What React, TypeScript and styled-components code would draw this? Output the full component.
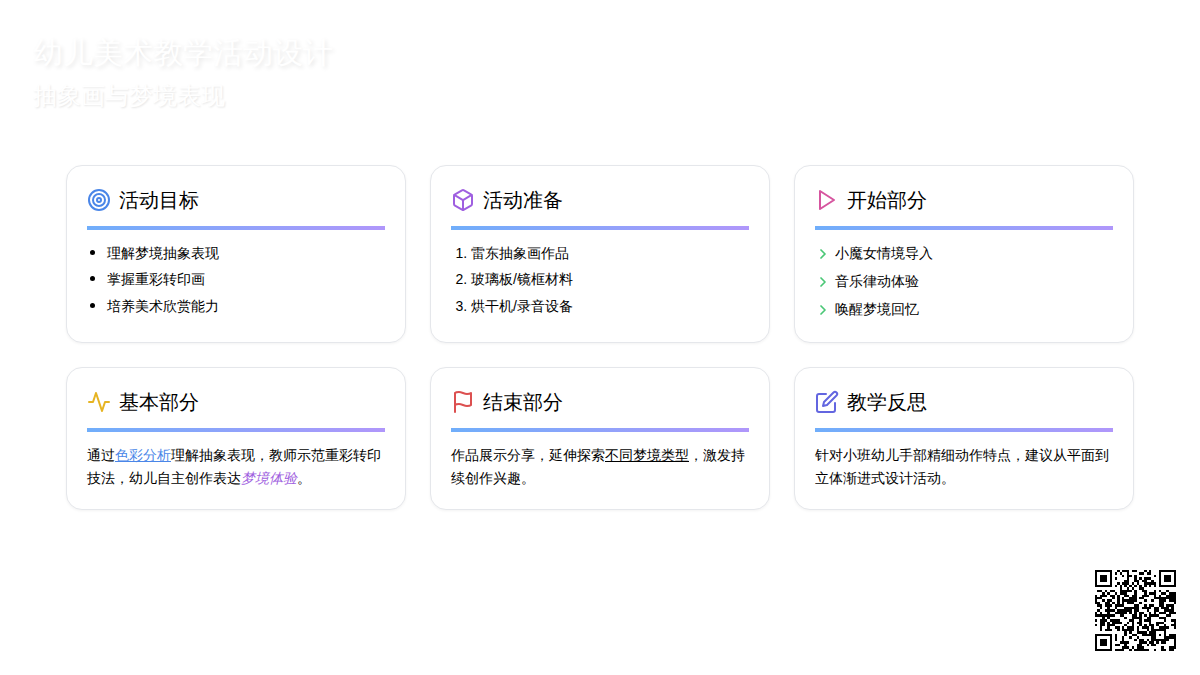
import React from 'react';
import styled, { createGlobalStyle } from 'styled-components';
import { Target, ChevronRight } from 'lucide-react';

const GlobalStyle = createGlobalStyle`
  html, body {
    margin: 0;
    padding: 0;
    background: #fff;
    color: #000;
    font-family: "Liberation Sans", sans-serif;
  }
`;

const Page = styled.div`
  position: relative;
  width: 1200px;
  height: 675px;
  overflow: hidden;
  background: #fff;
`;

const Header = styled.header`
  padding: 33px 33px 0;
`;

const Title = styled.h1`
  margin: 0;
  font-size: 30px;
  line-height: 40px;
  font-weight: 400;
  color: #fff;
  text-shadow: 2px 2px 4px rgba(0, 0, 0, 0.1);
`;

const Subtitle = styled.h2`
  margin: 7px 0 0;
  font-size: 24px;
  line-height: 32px;
  font-weight: 400;
  color: #fff;
  text-shadow: 1px 1px 2px rgba(0, 0, 0, 0.1);
`;

const Grid = styled.main`
  display: grid;
  grid-template-columns: repeat(3, 340px);
  gap: 24px;
  margin: 53px 0 0 66px;
`;

const Card = styled.section`
  box-sizing: border-box;
  padding: 20px;
  background: #fff;
  border: 1px solid #e5e7eb;
  border-radius: 16px;
  box-shadow: 0 1px 3px rgba(0, 0, 0, 0.05);
`;

const CardHead = styled.div`
  display: flex;
  align-items: center;
  gap: 8px;
  height: 28px;
  margin-bottom: 12px;
`;

const IconSlot = styled.span<{ $color: string }>`
  display: flex;
  width: 24px;
  height: 24px;
  color: ${(p) => p.$color};
`;

const CardTitle = styled.h3`
  margin: 0;
  font-size: 20px;
  line-height: 28px;
  font-weight: 400;
`;

const Bar = styled.div`
  height: 4px;
  margin-bottom: 12px;
  background: linear-gradient(90deg, #60a5fa, #a78bfa);
  opacity: 0.9;
`;

const BulletList = styled.ul`
  margin: 0;
  padding-left: 20px;
  font-size: 14px;
  line-height: 22.4px;

  li::marker {
    font-size: 17px;
  }
`;

const NumberList = styled.ol`
  margin: 0;
  padding-left: 20px;
  font-size: 14px;
  line-height: 22.4px;
`;

const Item = styled.li`
  margin-bottom: 4px;
`;

const ArrowList = styled.ul`
  margin: 0;
  padding: 0;
  list-style: none;
  font-size: 14px;
  line-height: 22.4px;
`;

const ArrowItem = styled.li`
  display: flex;
  align-items: flex-start;
  gap: 4px;
  height: 24px;
  margin-bottom: 4px;

  &:last-child {
    margin-bottom: 0;
  }

  svg {
    margin-top: 4px;
    color: #4ac776;
    flex: none;
  }
`;

const Text = styled.p`
  margin: 0 0 -1px;
  font-size: 14px;
  line-height: 23px;
`;

const BlueLink = styled.span`
  color: #4a86e8;
  text-decoration: underline;
`;

const PurpleEm = styled.em`
  color: #9f5fe0;
  font-style: italic;
`;

const Under = styled.span`
  text-decoration: underline;
`;

const QrBox = styled.div`
  position: absolute;
  right: 24px;
  bottom: 24px;
  width: 81px;
  height: 81px;
`;

const QR_SIZE = 33;

const reserved = (x: number, y: number) =>
  (x < 8 && y < 8) ||
  (x >= QR_SIZE - 8 && y < 8) ||
  (x < 8 && y >= QR_SIZE - 8) ||
  (x >= 24 && x <= 28 && y >= 24 && y <= 28) ||
  x === 6 ||
  y === 6;

const qrCells = () => {
  const cells: [number, number][] = [];
  let seed = 73421;
  for (let y = 0; y < QR_SIZE; y++) {
    for (let x = 0; x < QR_SIZE; x++) {
      seed = (seed * 1103515245 + 12345) & 0x7fffffff;
      if (!reserved(x, y) && (seed >> 16) % 100 < 50) cells.push([x, y]);
    }
  }
  for (let i = 8; i < QR_SIZE - 8; i += 2) {
    cells.push([i, 6], [6, i]);
  }
  return cells;
};

const Finder = ({ x, y }: { x: number; y: number }) => (
  <g>
    <rect x={x + 0.5} y={y + 0.5} width={6} height={6} fill="none" stroke="#000" />
    <rect x={x + 2} y={y + 2} width={3} height={3} fill="#000" />
  </g>
);

const QrCode = () => (
  <svg width="81" height="81" viewBox="0 0 33 33" shapeRendering="crispEdges">
    <Finder x={0} y={0} />
    <Finder x={26} y={0} />
    <Finder x={0} y={26} />
    <rect x={24.5} y={24.5} width={4} height={4} fill="none" stroke="#000" />
    <rect x={26} y={26} width={1} height={1} fill="#000" />
    {qrCells().map(([x, y]) => (
      <rect key={`${x}-${y}`} x={x} y={y} width={1} height={1} fill="#000" />
    ))}
  </svg>
);

const Icon = ({ children }: { children: React.ReactNode }) => (
  <svg width="24" height="24" viewBox="0 0 24 24" fill="none" stroke="currentColor" strokeWidth="2" strokeLinecap="round" strokeLinejoin="round">
    {children}
  </svg>
);

const BoxIcon = () => (
  <Icon>
    <path d="M21 16V8a2 2 0 0 0-1-1.73l-7-4a2 2 0 0 0-2 0l-7 4A2 2 0 0 0 3 8v8a2 2 0 0 0 1 1.73l7 4a2 2 0 0 0 2 0l7-4A2 2 0 0 0 21 16z" />
    <polyline points="3.27 6.96 12 12.01 20.73 6.96" />
    <line x1="12" y1="22.08" x2="12" y2="12" />
  </Icon>
);

const PlayIcon = () => (
  <Icon>
    <polygon points="5 3 19 12 5 21 5 3" />
  </Icon>
);

const ActivityIcon = () => (
  <Icon>
    <polyline points="22 12 18 12 15 21 9 3 6 12 2 12" />
  </Icon>
);

const FlagIcon = () => (
  <Icon>
    <path d="M4 15s1-1 4-1 5 2 8 2 4-1 4-1V3s-1 1-4 1-5-2-8-2-4 1-4 1z" />
    <line x1="4" y1="22" x2="4" y2="15" />
  </Icon>
);

const EditIcon = () => (
  <Icon>
    <path d="M11 4H4a2 2 0 0 0-2 2v14a2 2 0 0 0 2 2h14a2 2 0 0 0 2-2v-7" />
    <path d="M18.5 2.5a2.121 2.121 0 0 1 3 3L12 15l-4 1 1-4 9.5-9.5z" />
  </Icon>
);

const Arrow = () => <ChevronRight size={16} strokeWidth={2.6} />;

const CardHeader = ({ icon, color, title }: { icon: React.ReactNode; color: string; title: string }) => (
  <>
    <CardHead>
      <IconSlot $color={color}>{icon}</IconSlot>
      <CardTitle>{title}</CardTitle>
    </CardHead>
    <Bar />
  </>
);

export default function App() {
  return (
    <Page>
      <GlobalStyle />
      <Header>
        <Title>幼儿美术教学活动设计</Title>
        <Subtitle>抽象画与梦境表现</Subtitle>
      </Header>
      <Grid>
        <Card>
          <CardHeader icon={<Target size={24} />} color="#4a86e8" title="活动目标" />
          <BulletList>
            <Item>理解梦境抽象表现</Item>
            <Item>掌握重彩转印画</Item>
            <Item>培养美术欣赏能力</Item>
          </BulletList>
        </Card>
        <Card>
          <CardHeader icon={<BoxIcon />} color="#9f5fe0" title="活动准备" />
          <NumberList>
            <Item>雷东抽象画作品</Item>
            <Item>玻璃板/镜框材料</Item>
            <Item>烘干机/录音设备</Item>
          </NumberList>
        </Card>
        <Card>
          <CardHeader icon={<PlayIcon />} color="#d6559f" title="开始部分" />
          <ArrowList>
            <ArrowItem><Arrow />小魔女情境导入</ArrowItem>
            <ArrowItem><Arrow />音乐律动体验</ArrowItem>
            <ArrowItem><Arrow />唤醒梦境回忆</ArrowItem>
          </ArrowList>
        </Card>
        <Card>
          <CardHeader icon={<ActivityIcon />} color="#e6b422" title="基本部分" />
          <Text>通过<BlueLink>色彩分析</BlueLink>理解抽象表现，教师示范重彩转印技法，幼儿自主创作表达<PurpleEm>梦境体验</PurpleEm>。</Text>
        </Card>
        <Card>
          <CardHeader icon={<FlagIcon />} color="#dc5050" title="结束部分" />
          <Text>作品展示分享，延伸探索<Under>不同梦境类型</Under>，激发持续创作兴趣。</Text>
        </Card>
        <Card>
          <CardHeader icon={<EditIcon />} color="#6366e0" title="教学反思" />
          <Text>针对小班幼儿手部精细动作特点，建议从平面到立体渐进式设计活动。</Text>
        </Card>
      </Grid>
      <QrBox>
        <QrCode />
      </QrBox>
    </Page>
  );
}
